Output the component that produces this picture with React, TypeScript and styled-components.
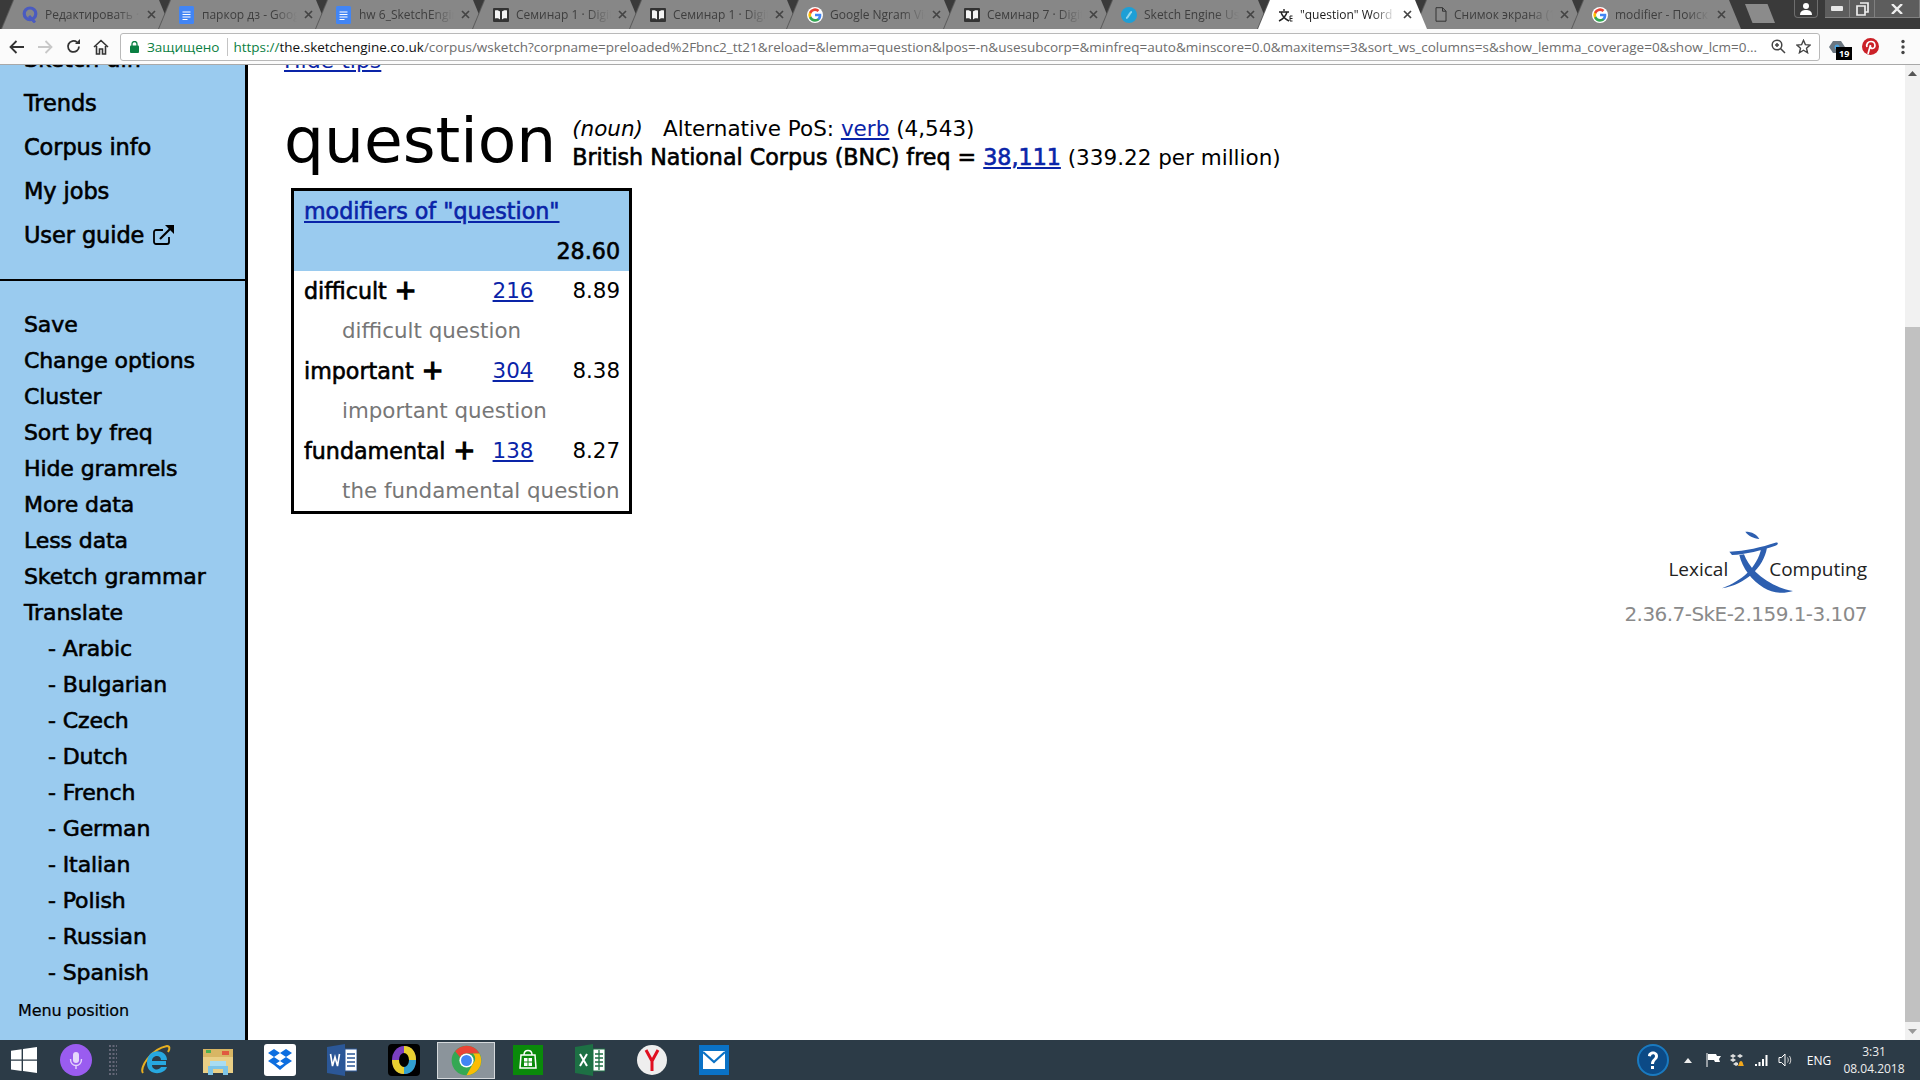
import React from "react";
import styled, { createGlobalStyle } from "styled-components";

const Global = createGlobalStyle`
  html, body { margin: 0; padding: 0; height: 100%; overflow: hidden; background: #fff; }
  * { box-sizing: border-box; }
`;

const PAGE_FONT = `"DejaVu Sans", "Noto Sans", sans-serif`;
const UI_FONT = `"Open Sans", "Noto Sans", sans-serif`;

const Shell = styled.div`
  width: 1920px; height: 1080px; display: flex; flex-direction: column; overflow: hidden;
  font-family: ${PAGE_FONT};
`;

/* ---- Tab strip ---- */
const TabStrip = styled.div`
  height: 29px; flex: none; background: #3a3a3a; display: flex; padding-left: 2px; position: relative;
`;
const Tab = styled.div<{ $active?: boolean }>`
  width: 169px; height: 29px; flex: none; margin-right: -12px;
  filter: drop-shadow(-1px 0 0 #5a5a5a);
  position: relative;
  z-index: ${(p) => (p.$active ? 5 : 1)};
`;
const TabFace = styled.div<{ $active?: boolean }>`
  height: 100%; display: flex; align-items: center; padding: 0 15px 0 20px; gap: 7px;
  clip-path: polygon(0 100%, 12px 0, calc(100% - 12px) 0, 100% 100%);
  background: ${(p) => (p.$active ? "#ffffff" : "#878787")};
  color: ${(p) => (p.$active ? "#1a1a1a" : "#3e3e3e")};
`;
const TabTitle = styled.span`
  flex: 1; font: 12px ${UI_FONT}; white-space: nowrap; overflow: hidden;
  mask-image: linear-gradient(90deg, #000 75%, transparent 100%);
`;
const NewTab = styled.div`
  width: 30px; height: 19px; margin: 4px 0 0 16px; background: #8b8b8b; flex: none;
  clip-path: polygon(0 0, 75% 0, 100% 100%, 25% 100%);
`;
const WindowControls = styled.div`
  margin-left: auto; display: flex; height: 18px; flex: none;
`;
const UserButton = styled.div`
  width: 24px; height: 18px; margin-right: 7px; background: #3c3c3c; border: 1px solid #6e6e6e; border-top: 0;
  border-radius: 0 0 4px 4px; display: flex; align-items: center; justify-content: center;
`;
const WinButton = styled.div<{ $w: number }>`
  width: ${(p) => p.$w}px; height: 18px; background: #5d5d5d; border: 1px solid #808080; border-top: 0; border-left-width: 0;
  display: flex; align-items: center; justify-content: center; color: #e8e8e8;
  &:first-child { border-left-width: 1px; }
`;

/* ---- Toolbar ---- */
const Toolbar = styled.div`
  height: 36px; flex: none; background: #fbfbfb; border-bottom: 1px solid #a9a9a9;
  display: flex; align-items: center; padding: 0 0 0 3px;
`;
const NavGroup = styled.div`
  display: flex; align-items: center; width: 117px; flex: none;
`;
const NavIcon = styled.div`
  width: 28px; height: 24px; display: flex; align-items: center; justify-content: center; flex: none;
`;
const Omnibox = styled.div`
  width: 1700px; height: 28px; flex: none; background: #fff; border: 1px solid #b9b9b9; border-radius: 3px;
  display: flex; align-items: center; padding: 0 6px 0 8px; font: 13px ${UI_FONT}; overflow: hidden;
`;
const Secure = styled.span`
  color: #0b8043; display: flex; align-items: center; gap: 8px; padding: 0 8px 0 1px; border-right: 1px solid #c4c4c4;
  height: 18px; flex: none; white-space: nowrap; font-size: 13.5px;
`;
const Url = styled.span`
  flex: 1; margin-left: 5px; white-space: nowrap; overflow: hidden; color: #6d6d6d; font-size: 13.5px;
  b { font-weight: 400; color: #111; }
  i { font-style: normal; color: #0b8043; }
`;
const OmniIcons = styled.div`
  display: flex; align-items: center; gap: 10px; flex: none; margin-left: 6px; padding-right: 2px;
`;
const Extensions = styled.div`
  display: flex; align-items: center; flex: 1; padding-left: 7px; gap: 13px;
`;
const ExtIcon = styled.div`
  position: relative; width: 20px; height: 20px; display: flex; align-items: center; justify-content: center;
`;
const Badge = styled.span`
  position: absolute; left: 9px; top: 10px; background: #000; color: #fff; font: 700 9px ${UI_FONT};
  padding: 1px 3px; line-height: 11px;
`;

/* ---- Page ---- */
const Body = styled.div`
  flex: 1; display: flex; min-height: 0; overflow: hidden;
`;
const Sidebar = styled.nav`
  width: 248px; flex: none; background: #9acbef; border-right: 3px solid #000; overflow: hidden;
  font-size: 22px; letter-spacing: -0.1px; -webkit-text-stroke: 0.6px #000; color: #000; line-height: 36px;
`;
const TopMenu = styled.div`
  margin-top: -28px; padding-bottom: 22px; border-bottom: 2px solid #000;
`;
const MainItem = styled.div`
  height: 44px; line-height: 44px; padding-left: 24px; display: flex; align-items: center; gap: 8px;
  font-size: 22.5px;
`;
const ActionMenu = styled.div`
  padding-top: 26px;
`;
const ActionItem = styled.div<{ $sub?: boolean }>`
  height: 36px; padding-left: ${(p) => (p.$sub ? 48 : 24)}px; white-space: nowrap;
`;
const MenuPosition = styled.div`
  font-size: 16px; padding: 2px 0 0 18px; line-height: 36px; -webkit-text-stroke: 0.2px #000;
`;
const Main = styled.main`
  flex: 1; min-width: 0; padding: 0 38px 0 36px; display: flex; flex-direction: column; overflow: hidden;
`;
const ClippedLink = styled.a`
  display: block; margin-top: -21px; height: 34px; line-height: 34px; font-size: 22px; color: #0a24a8;
  text-decoration: underline; width: fit-content; flex: none;
`;
const Heading = styled.div`
  display: flex; align-items: flex-start; margin-top: 19px; height: 91px; flex: none;
`;
const Word = styled.h1`
  margin: 0; font-size: 63px; font-weight: 400; line-height: 88px; color: #000; margin-right: 16px;
`;
const HeadInfo = styled.div`
  font-size: 21.5px; line-height: 28px; padding-top: 18px; color: #000; white-space: nowrap;
  a { color: #0a24a8; }
  em { margin-right: 20px; }
  strong { font-weight: 400; font-size: 22.2px; -webkit-text-stroke: 0.6px currentColor; }
`;
const Table = styled.table`
  border-collapse: collapse; border: 3px solid #000; margin-left: 7px; width: 341px; font-size: 21.4px; line-height: 40px;
  table-layout: fixed; flex: none;
  a { color: #0a24a8; }
`;
const HeadRow = styled.tr`
  background: #9acbef; height: 40px;
`;
const Cell = styled.td<{ $align?: string; $muted?: boolean; $bold?: boolean; $pad?: number }>`
  padding: 0 ${(p) => (p.$align === "center" ? 0 : 9)}px 0 ${(p) => p.$pad ?? 10}px; height: 40px;
  text-align: ${(p) => p.$align ?? "left"}; white-space: nowrap;
  color: ${(p) => (p.$muted ? "#777" : "#000")};
  font-size: ${(p) => (p.$bold ? "22.2px" : "21.4px")};
  -webkit-text-stroke: ${(p) => (p.$bold ? "0.6px" : "0")};
`;
const Plus = styled.span`
  font-size: 26px; line-height: 20px; margin-left: 8px; -webkit-text-stroke: 1.3px #000;
`;
const Footer = styled.div`
  margin-top: 17px; display: flex; flex-direction: column; align-items: flex-end; flex: none;
`;
const Logo = styled.div`
  display: flex; align-items: center; font: 19px "Open Sans", sans-serif; color: #222; height: 65px; padding-top: 11px;
  svg { margin: 0 -24px 14px -6px; flex: none; }
`;
const Version = styled.div`
  font-size: 20px; letter-spacing: -0.55px; color: #8a8a8a; line-height: 30px; margin-top: 3px;
`;
const ScrollBar = styled.div`
  width: 15px; flex: none; background: #f1f1f1; display: flex; flex-direction: column; align-items: center;
`;
const ScrollArrow = styled.div`
  height: 17px; flex: none; display: flex; align-items: center; justify-content: center;
`;
const ScrollThumb = styled.div`
  width: 15px; height: 695px; margin-top: auto; background: #c1c1c1; margin-bottom: 1px;
`;

/* ---- Taskbar ---- */
const Taskbar = styled.div`
  height: 40px; flex: none; background: #2c3b47; display: flex; align-items: center; color: #fff;
`;
const TaskIcons = styled.div`
  display: flex; align-items: center; height: 40px;
`;
const TaskSlot = styled.div<{ $w: number; $on?: boolean }>`
  width: ${(p) => p.$w}px; height: 37px; display: flex; align-items: center; justify-content: center; flex: none;
  background: ${(p) => (p.$on ? "#8b949b" : "transparent")};
  border: ${(p) => (p.$on ? "1px solid #d5d9dc" : "0")};
`;
const Tray = styled.div`
  margin-left: auto; display: flex; align-items: center; height: 40px;
`;
const TraySlot = styled.div<{ $w: number }>`
  width: ${(p) => p.$w}px; display: flex; align-items: center; justify-content: center; flex: none;
`;
const HelpSlot = styled(TraySlot)`
  margin-right: 4px;
`;
const Lang = styled.span`
  font: 12px ${UI_FONT}; width: 44px; text-align: center;
`;
const Clock = styled.div`
  font: 12px/17px ${UI_FONT}; width: 66px; text-align: center; flex: none; margin-right: 13px; color: #eee;
`;

/* ---- Icons ---- */
const GLogo = () => (
  <svg width="16" height="16" viewBox="0 0 48 48">
    <circle cx="24" cy="24" r="24" fill="#fff" />
    <path d="M43 24.5c0-1.4-.1-2.700-.4-4H24v7.600h10.800a9.300 9.300 0 0 1-4 6.100v5h6.500C41 35.700 43 30.600 43 24.500z" fill="#4285F4" />
    <path d="M24 44c5.400 0 9.900-1.800 13.300-4.800l-6.500-5c-1.800 1.200-4.100 1.900-6.800 1.900-5.200 0-9.600-3.500-11.200-8.200H6.100v5.200A20 20 0 0 0 24 44z" fill="#34A853" />
    <path d="M12.800 27.900a12 12 0 0 1 0-7.700V15H6.100a20 20 0 0 0 0 18.100z" fill="#FBBC05" />
    <path d="M24 11.900c2.900 0 5.600 1 7.700 3l5.700-5.700A20 20 0 0 0 6.100 15l6.700 5.200c1.600-4.700 6-8.300 11.200-8.300z" fill="#EA4335" />
  </svg>
);
const Doc = () => (
  <svg width="16" height="18" viewBox="0 0 16 18">
    <rect x="0" y="0" width="15" height="18" rx="1.500" fill="#4285f4" />
    <path d="M3.500 6h8M3.500 8.500h8M3.500 11h8M3.500 13.500h5" stroke="#fff" strokeWidth="1.200" />
  </svg>
);
const Book = () => (
  <svg width="16" height="14" viewBox="0 0 16 14">
    <rect x="0" y="0" width="16" height="14" rx="1" fill="#333" />
    <path d="M2 2.500c2-.8 4 0 5 1v8c-1-1-3-1.500-5-1zM14 2.500c-2-.8-4 0-5 1v8c1-1 3-1.500 5-1z" fill="#f4f4f4" />
  </svg>
);
const QuoraQ = () => (
  <svg width="16" height="17" viewBox="0 0 16 17">
    <circle cx="8" cy="7.800" r="5.800" fill="none" stroke="#4a5bc0" strokeWidth="3.200" />
    <path d="M7 10l6 6.500" stroke="#4a5bc0" strokeWidth="3" />
  </svg>
);
const SkE = () => (
  <svg width="16" height="16" viewBox="0 0 16 16">
    <circle cx="8" cy="8" r="8" fill="#1e9fd6" />
    <path d="M5 11c2 0 2-2 3-3s1-3 3-3" stroke="#8dd5ee" strokeWidth="2" fill="none" />
  </svg>
);
const LxFav = () => (
  <svg width="15" height="14" viewBox="0 0 15 14">
    <path d="M1 4h10M6 1v2M3 4c1 4 4 7 8 9M9 4c-1 4-4 7-8 9" stroke="#222" strokeWidth="1.400" fill="none" />
    <path d="M12 8h2.500M12 10.500h2.500M12 8v5h2.500" stroke="#222" strokeWidth="1" fill="none" />
  </svg>
);
const PageIcon = () => (
  <svg width="12" height="15" viewBox="0 0 12 15">
    <path d="M1 .7h6.500L11 4.200v10H1zM7.500.7v3.500H11" fill="#8a8a8a" stroke="#333" />
  </svg>
);
const CloseX = () => (
  <svg width="9" height="9" viewBox="0 0 9 9" style={{ flex: "none" }}>
    <path d="M1 1l7 7M8 1L1 8" stroke="#444" strokeWidth="1.700" />
  </svg>
);

const tabs: { icon: React.ReactNode; title: string; active?: boolean }[] = [
  { icon: <QuoraQ />, title: "Редактировать · Тема" },
  { icon: <Doc />, title: "паркор дз - Google" },
  { icon: <Doc />, title: "hw 6_SketchEngine" },
  { icon: <Book />, title: "Семинар 1 · Digital" },
  { icon: <Book />, title: "Семинар 1 · Digital" },
  { icon: <GLogo />, title: "Google Ngram Viewer" },
  { icon: <Book />, title: "Семинар 7 · Digital" },
  { icon: <SkE />, title: "Sketch Engine User" },
  { icon: <LxFav />, title: "\"question\" Word sketch", active: true },
  { icon: <PageIcon />, title: "Снимок экрана (1)" },
  { icon: <GLogo />, title: "modifier - Поиск в" },
];

const WinLogo = () => (
  <svg width="26" height="26" viewBox="0 0 26 26">
    <path d="M0 3.700l10.600-1.500v10.200H0zM12 2l14-2v12.400H12zM0 13.800h10.600V24L0 22.500zM12 13.800h14V26l-14-2z" fill="#fff" />
  </svg>
);
const Cortana = () => (
  <svg width="32" height="32" viewBox="0 0 32 32">
    <circle cx="16" cy="16" r="16" fill="#9a5cf0" />
    <rect x="13" y="8" width="6" height="11" rx="3" fill="#e6d8fb" />
    <path d="M10.500 15c0 4 2.500 6.500 5.500 6.500s5.500-2.500 5.500-6.500M16 21.500V25" stroke="#e6d8fb" strokeWidth="1.400" fill="none" />
  </svg>
);
const IE = () => (
  <svg width="32" height="32" viewBox="0 0 32 32">
    <path d="M4 29C0 24 12 5 28 2c3 0 3 3 1 6" fill="none" stroke="#e8b020" strokeWidth="2" />
    <path d="M27 17H13c0-6 9-7 9-1h6c0-11-19-13-20 2-1 14 17 14 20 5h-6c-2 4-9 3-9-2h14z" fill="#27a8e0" />
  </svg>
);
const Folder = () => (
  <svg width="32" height="32" viewBox="0 0 32 32">
    <path d="M1 5h12l2 3h16v21H1z" fill="#e9cf86" />
    <rect x="1" y="5" width="30" height="8" fill="#d8b664" />
    <rect x="4" y="6" width="5" height="3" fill="#4caf50" />
    <rect x="20" y="7" width="7" height="4" fill="#e05a40" />
    <path d="M6 31V22h20v9h-5v-6H11v6z" fill="#7cc4e8" />
    <rect x="8" y="17" width="16" height="5" fill="#a8dcf2" />
  </svg>
);
const Dropbox = () => (
  <svg width="32" height="32" viewBox="0 0 32 32">
    <rect width="32" height="32" rx="3" fill="#fff" />
    <path d="M10 5l6 4-6 4-6-4zM22 5l6 4-6 4-6-4zM10 13l6 4-6 4-6-4zM22 13l6 4-6 4-6-4zM16 22l6-3.500v2.500L16 26l-6-5v-2.500z" fill="#0d6ee0" />
  </svg>
);
const Word2 = () => (
  <svg width="30" height="32" viewBox="0 0 30 32">
    <path d="M0 3l18-3v32L0 29z" fill="#2b5797" />
    <rect x="18" y="5" width="12" height="22" fill="#fff" stroke="#2b5797" />
    <path d="M20 10h8M20 14h8M20 18h8M20 22h8" stroke="#2b5797" strokeWidth="1.500" />
    <path d="M3.500 10l2 12 2.500-9 2.500 9 2-12" stroke="#fff" strokeWidth="1.600" fill="none" />
  </svg>
);
const Lens = () => (
  <svg width="32" height="32" viewBox="0 0 32 32">
    <rect width="32" height="32" rx="4" fill="#000" />
    <ellipse cx="16" cy="16" rx="12" ry="14" fill="#7a3fc0" />
    <path d="M16 2c8 0 12 6 12 14H16zM4 16c0 8 4 14 12 14V16z" fill="#e8d030" />
    <path d="M28 16c0 8-4 14-12 14V16z" fill="#30a0d0" />
    <ellipse cx="16" cy="16" rx="5" ry="7" fill="#000" />
  </svg>
);
const Chrome = () => (
  <svg width="31" height="31" viewBox="0 0 48 48">
    <circle cx="24" cy="24" r="23" fill="#34a853" />
    <path d="M24 1a23 23 0 0 1 20 12H24a11 11 0 0 0-10 6L6.500 9.500A23 23 0 0 1 24 1z" fill="#ea4335" />
    <path d="M44 13a23 23 0 0 1-20 34l10-18a11 11 0 0 0 0-16z" fill="#fbbc05" />
    <circle cx="24" cy="24" r="11" fill="#fff" />
    <circle cx="24" cy="24" r="8.500" fill="#4285f4" />
  </svg>
);
const Store = () => (
  <svg width="30" height="30" viewBox="0 0 30 30">
    <rect width="30" height="30" fill="#0a8a0a" />
    <path d="M8 10h14l1 13H7z" fill="none" stroke="#fff" strokeWidth="1.500" />
    <path d="M11 10c0-6 8-6 8 0" fill="none" stroke="#fff" strokeWidth="1.500" />
    <path d="M11 13h3.500v3.500H11zM15.500 13H19v3.500h-3.500zM11 17.500h3.500V21H11zM15.500 17.500H19V21h-3.500z" fill="#fff" />
  </svg>
);
const Excel = () => (
  <svg width="30" height="32" viewBox="0 0 30 32">
    <path d="M0 3l18-3v32L0 29z" fill="#1d7044" />
    <rect x="18" y="5" width="12" height="22" fill="#fff" stroke="#1d7044" />
    <path d="M20 10h8M20 14h8M20 18h8M20 22h8M24 6v20" stroke="#1d7044" strokeWidth="1.300" />
    <path d="M5 10l7 12M12 10L5 22" stroke="#fff" strokeWidth="2" />
  </svg>
);
const Yandex = () => (
  <svg width="30" height="30" viewBox="0 0 30 30">
    <circle cx="15" cy="15" r="15" fill="#eeeeee" />
    <path d="M9 5l6 11 6-11M15 16v10" stroke="#e01020" strokeWidth="3" fill="none" />
  </svg>
);
const Mail = () => (
  <svg width="30" height="30" viewBox="0 0 30 30">
    <rect width="30" height="30" fill="#0a72c6" />
    <rect x="4" y="6" width="22" height="18" fill="#fff" />
    <path d="M4 7l11 10 11-10" stroke="#0a72c6" strokeWidth="2.200" fill="none" />
  </svg>
);

const taskIcons: { w: number; el: React.ReactNode; on?: boolean }[] = [
  { w: 48, el: <WinLogo /> },
  { w: 56, el: <Cortana /> },
  { w: 17, el: <svg width="10" height="32" viewBox="0 0 10 32"><path d="M1 2h8M1 6h8M1 10h8M1 14h8M1 18h8M1 22h8M1 26h8M1 30h8" stroke="#778" strokeWidth="1.500" strokeDasharray="2 1.500" /></svg> },
  { w: 68, el: <IE /> },
  { w: 58, el: <Folder /> },
  { w: 66, el: <Dropbox /> },
  { w: 58, el: <Word2 /> },
  { w: 66, el: <Lens /> },
  { w: 58, el: <Chrome />, on: true },
  { w: 66, el: <Store /> },
  { w: 58, el: <Excel /> },
  { w: 66, el: <Yandex /> },
  { w: 58, el: <Mail /> },
];

const mainItems = ["Sketch diff", "Trends", "Corpus info", "My jobs"];
const actions = ["Save", "Change options", "Cluster", "Sort by freq", "Hide gramrels", "More data", "Less data", "Sketch grammar", "Translate"];
const langs = ["Arabic", "Bulgarian", "Czech", "Dutch", "French", "German", "Italian", "Polish", "Russian", "Spanish"];
const rows = [
  { w: "difficult", n: 216, s: "8.89", ex: "difficult question" },
  { w: "important", n: 304, s: "8.38", ex: "important question" },
  { w: "fundamental", n: 138, s: "8.27", ex: "the fundamental question" },
];

export default function App() {
  return (
    <Shell>
      <Global />
      <TabStrip>
        {tabs.map((t, i) => (
          <Tab key={i} $active={t.active}>
            <TabFace $active={t.active}>
              {t.icon}
              <TabTitle>{t.title}</TabTitle>
              <CloseX />
            </TabFace>
          </Tab>
        ))}
        <NewTab />
        <WindowControls>
          <UserButton>
            <svg width="12" height="13" viewBox="0 0 12 13"><circle cx="6" cy="4" r="3" fill="#fff" /><path d="M0 13c0-4 3-5 6-5s6 1 6 5z" fill="#fff" /></svg>
          </UserButton>
          <WinButton $w={25}>
            <svg width="12" height="5"><rect width="12" height="5" rx="1" fill="#e8e8e8" /></svg>
          </WinButton>
          <WinButton $w={25}>
            <svg width="13" height="14" viewBox="0 0 13 14"><path d="M4 1h8v9H9M1 4h8v9H1z" fill="none" stroke="#eee" strokeWidth="1.700" /></svg>
          </WinButton>
          <WinButton $w={45}>
            <svg width="12" height="10" viewBox="0 0 12 10"><path d="M1 0l10 10M11 0L1 10" stroke="#eee" strokeWidth="2.400" /></svg>
          </WinButton>
        </WindowControls>
      </TabStrip>

      <Toolbar>
        <NavGroup>
          <NavIcon><svg width="16" height="14" viewBox="0 0 16 14"><path d="M15 7H2M7.500 1L1.500 7l6 6" fill="none" stroke="#333" strokeWidth="1.800" /></svg></NavIcon>
          <NavIcon><svg width="16" height="14" viewBox="0 0 16 14"><path d="M1 7h13M8.500 1l6 6-6 6" fill="none" stroke="#c8c8c8" strokeWidth="1.800" /></svg></NavIcon>
          <NavIcon><svg width="15" height="15" viewBox="0 0 15 15"><path d="M13 7.500A5.500 5.500 0 1 1 11 3.200" fill="none" stroke="#333" strokeWidth="1.800" /><path d="M9 5h5V0z" fill="#333" /></svg></NavIcon>
          <NavIcon><svg width="16" height="16" viewBox="0 0 16 16"><path d="M1 8l7-6.500L15 8M3.500 7v8h3V10h3v5h3V7" fill="none" stroke="#333" strokeWidth="1.600" /></svg></NavIcon>
        </NavGroup>
        <Omnibox>
          <Secure>
            <svg width="9" height="12" viewBox="0 0 9 12"><rect y="4.500" width="9" height="7.500" rx="1" fill="#0b8043" /><path d="M2 5V3a2.500 2.500 0 0 1 5 0v2" fill="none" stroke="#0b8043" strokeWidth="1.300" /></svg>
            Защищено
          </Secure>
          <Url><i>https://</i><b>the.sketchengine.co.uk</b>/corpus/wsketch?corpname=preloaded%2Fbnc2_tt21&amp;reload=&amp;lemma=question&amp;lpos=-n&amp;usesubcorp=&amp;minfreq=auto&amp;minscore=0.0&amp;maxitems=3&amp;sort_ws_columns=s&amp;show_lemma_coverage=0&amp;show_lcm=0...</Url>
          <OmniIcons>
            <svg width="15" height="15" viewBox="0 0 15 15"><circle cx="6" cy="6" r="4.800" fill="none" stroke="#444" strokeWidth="1.500" /><path d="M9.500 9.500L14 14M4 6h4M6 4v4" stroke="#444" strokeWidth="1.500" /></svg>
            <svg width="15" height="15" viewBox="0 0 24 24"><path d="M12 2l3 7 7.500.7-5.700 5 1.700 7.300L12 18l-6.500 4 1.700-7.300-5.700-5L9 9z" fill="none" stroke="#444" strokeWidth="2.200" /></svg>
          </OmniIcons>
        </Omnibox>
        <Extensions>
          <ExtIcon>
            <svg width="18" height="14" viewBox="0 0 18 14"><path d="M1 7l4-6h8l4 6-4 6H5z" fill="#6b7680" /><circle cx="9" cy="7" r="2.500" fill="#4aa3df" /></svg>
            <Badge>19</Badge>
          </ExtIcon>
          <ExtIcon>
            <svg width="17" height="17" viewBox="0 0 17 17"><circle cx="8.500" cy="8.500" r="8.500" fill="#cb2027" /><path d="M6 16l2.500-9M5 9c-1-3 1-5.500 4-5.500 5 0 5 7 1.500 7-1.500 0-2-1-2-2" fill="none" stroke="#fff" strokeWidth="1.700" /></svg>
          </ExtIcon>
          <ExtIcon>
            <svg width="4" height="16" viewBox="0 0 4 16"><circle cx="2" cy="2.500" r="1.700" fill="#444" /><circle cx="2" cy="8" r="1.700" fill="#444" /><circle cx="2" cy="13.500" r="1.700" fill="#444" /></svg>
          </ExtIcon>
        </Extensions>
      </Toolbar>

      <Body>
        <Sidebar>
          <TopMenu>
            {mainItems.map((m) => <MainItem key={m}>{m}</MainItem>)}
            <MainItem>
              User guide
              <svg width="24" height="22" viewBox="0 0 24 22"><path d="M17 13v5a2 2 0 0 1-2 2H4a2 2 0 0 1-2-2V8a2 2 0 0 1 2-2h7" fill="none" stroke="#000" strokeWidth="1.800" /><path d="M8 15L20 3" stroke="#000" strokeWidth="2.200" fill="none" /><path d="M13 1h9v9z" fill="#000" stroke="none" /></svg>
            </MainItem>
          </TopMenu>
          <ActionMenu>
            {actions.map((a) => <ActionItem key={a}>{a}</ActionItem>)}
            {langs.map((l) => <ActionItem key={l} $sub>- {l}</ActionItem>)}
            <MenuPosition>Menu position</MenuPosition>
          </ActionMenu>
        </Sidebar>
        <Main>
          <ClippedLink href="#">Hide tips</ClippedLink>
          <Heading>
            <Word>question</Word>
            <HeadInfo>
              <div><em>(noun)</em>Alternative PoS: <a href="#">verb</a> (4,543)</div>
              <div><strong>British National Corpus (BNC) freq = <a href="#">38,111</a></strong> (339.22 per million)</div>
            </HeadInfo>
          </Heading>
          <Table>
            <colgroup>
              <col width="197" />
              <col width="47" />
              <col width="94" />
            </colgroup>
            <tbody>
              <HeadRow><Cell colSpan={3} $bold><a href="#">modifiers of "question"</a></Cell></HeadRow>
              <HeadRow><Cell colSpan={3} $align="right" $bold>28.60</Cell></HeadRow>
              {rows.map((r) => (
                <React.Fragment key={r.w}>
                  <tr>
                    <Cell $bold>{r.w}<Plus>+</Plus></Cell>
                    <Cell $align="center" $pad={0}><a href="#">{r.n}</a></Cell>
                    <Cell $align="right" $pad={0}>{r.s}</Cell>
                  </tr>
                  <tr><Cell colSpan={3} $muted $pad={48}>{r.ex}</Cell></tr>
                </React.Fragment>
              ))}
            </tbody>
          </Table>
          <Footer>
            <Logo>
              Lexical
              <svg width="71" height="62" viewBox="0 0 213 186">
                <path d="M70 2C90 2 105 10 112 24 95 22 78 14 70 2zM22 62C70 60 120 48 160 35 170 33 170 40 160 44 120 58 70 70 30 72zM52 72L66 70C80 110 130 165 213 180 180 190 150 185 125 170 90 150 60 110 52 72zM118 52L135 50C125 110 70 160 0 172 60 150 105 110 118 52z" fill="#2d5fb0" />
              </svg>
              Computing
            </Logo>
            <Version>2.36.7-SkE-2.159.1-3.107</Version>
          </Footer>
        </Main>
        <ScrollBar>
          <ScrollArrow><svg width="9" height="5"><path d="M0 5l4.500-5L9 5z" fill="#555" /></svg></ScrollArrow>
          <ScrollThumb />
          <ScrollArrow><svg width="9" height="5"><path d="M0 0l4.500 5L9 0z" fill="#999" /></svg></ScrollArrow>
        </ScrollBar>
      </Body>

      <Taskbar>
        <TaskIcons>
          {taskIcons.map((t, i) => <TaskSlot key={i} $w={t.w} $on={t.on}>{t.el}</TaskSlot>)}
        </TaskIcons>
        <Tray>
          <HelpSlot $w={36}>
            <svg width="32" height="32" viewBox="0 0 32 32"><circle cx="16" cy="16" r="15" fill="#0c4a86" stroke="#1a7ac0" strokeWidth="2" /><path d="M11 12c0-6 10-6 10 0 0 4-4 4-4 8h-3c0-5 4-5 4-8 0-2.500-4-2.500-4 .5zM14 22h3v3h-3z" fill="#fff" /></svg>
          </HelpSlot>
          <TraySlot $w={26}><svg width="8" height="5"><path d="M0 5l4-5 4 5z" fill="#eee" /></svg></TraySlot>
          <TraySlot $w={24}><svg width="15" height="14" viewBox="0 0 15 14"><path d="M1 0v14" stroke="#fff" /><path d="M2 1h8l1 2h4l-2 3 1 3H9L8 7H2z" fill="#fff" /></svg></TraySlot>
          <TraySlot $w={24}><svg width="16" height="13" viewBox="0 0 16 13"><path d="M1 2l3-2 3 2-3 2zM8 2l3-2 3 2-3 2zM1 6l3-2 3 2-3 2zM4 10l3-2 2 1v2l-2 1z" fill="#ddd" /><path d="M9 12c1-1 1-5 3-5s2 4 3 5z" fill="#f2a81d" /></svg></TraySlot>
          <TraySlot $w={24}><svg width="15" height="12" viewBox="0 0 15 12"><path d="M1 10h2v2H1zM4.500 8h2v4h-2zM8 5h2v7H8zM11.500 1h2v11h-2z" fill="#fff" /></svg></TraySlot>
          <TraySlot $w={24}><svg width="15" height="14" viewBox="0 0 15 14"><path d="M1 4.500h2.500L7 1v12L3.500 9.500H1z" fill="none" stroke="#fff" /><path d="M9.500 4.500c1 1.500 1 3.500 0 5M11.500 3c1.700 2.500 1.700 5.500 0 8" fill="none" stroke="#ccc" /></svg></TraySlot>
          <Lang>ENG</Lang>
          <Clock>3:31<br />08.04.2018</Clock>
        </Tray>
      </Taskbar>
    </Shell>
  );
}
